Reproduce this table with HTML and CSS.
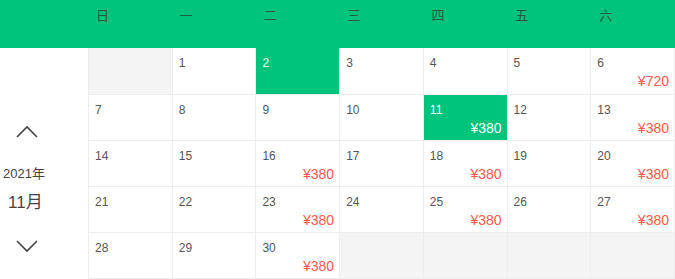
FILE: index.html
```html
<!DOCTYPE html>
<html lang="zh">
<head>
<meta charset="utf-8">
<link rel="stylesheet" href="styles.css">
</head>
<body>
<div class="cal">
  <div class="week">
    <div class="week-spacer"></div>
    <div class="wd">日</div><div class="wd">一</div><div class="wd">二</div><div class="wd">三</div><div class="wd">四</div><div class="wd">五</div><div class="wd">六</div>
  </div>
  <div class="body">
    <div class="side">
      <svg class="chev" width="24" height="14" viewBox="0 0 24 14"><path d="M2 12 L12 2 L22 12" fill="none" stroke="#444" stroke-width="1.6"/></svg>
      <div class="year">2021年</div>
      <div class="month">11月</div>
      <svg class="chev down" width="24" height="14" viewBox="0 0 24 14"><path d="M2 2 L12 12 L22 2" fill="none" stroke="#444" stroke-width="1.6"/></svg>
    </div>
    <div class="grid">
      <div class="cell empty"></div>
      <div class="cell"><span class="d">1</span></div>
      <div class="cell on"><span class="d">2</span></div>
      <div class="cell"><span class="d">3</span></div>
      <div class="cell"><span class="d">4</span></div>
      <div class="cell"><span class="d">5</span></div>
      <div class="cell"><span class="d">6</span><span class="p">¥720</span></div>

      <div class="cell"><span class="d">7</span></div>
      <div class="cell"><span class="d">8</span></div>
      <div class="cell"><span class="d">9</span></div>
      <div class="cell"><span class="d">10</span></div>
      <div class="cell on"><span class="d">11</span><span class="p">¥380</span></div>
      <div class="cell"><span class="d">12</span></div>
      <div class="cell"><span class="d">13</span><span class="p">¥380</span></div>

      <div class="cell"><span class="d">14</span></div>
      <div class="cell"><span class="d">15</span></div>
      <div class="cell"><span class="d">16</span><span class="p">¥380</span></div>
      <div class="cell"><span class="d">17</span></div>
      <div class="cell"><span class="d">18</span><span class="p">¥380</span></div>
      <div class="cell"><span class="d">19</span></div>
      <div class="cell"><span class="d">20</span><span class="p">¥380</span></div>

      <div class="cell"><span class="d">21</span></div>
      <div class="cell"><span class="d">22</span></div>
      <div class="cell"><span class="d">23</span><span class="p">¥380</span></div>
      <div class="cell"><span class="d">24</span></div>
      <div class="cell"><span class="d">25</span><span class="p">¥380</span></div>
      <div class="cell"><span class="d">26</span></div>
      <div class="cell"><span class="d">27</span><span class="p">¥380</span></div>

      <div class="cell"><span class="d">28</span></div>
      <div class="cell"><span class="d">29</span></div>
      <div class="cell"><span class="d">30</span><span class="p">¥380</span></div>
      <div class="cell empty"></div>
      <div class="cell empty"></div>
      <div class="cell empty"></div>
      <div class="cell empty"></div>
    </div>
  </div>
</div>
</body>
</html>
```

FILE: styles.css
```css
* { box-sizing: border-box; }
html, body { margin: 0; padding: 0; background: #fff; }
body { font-family: "Liberation Sans", Arial, "Noto Sans CJK SC", sans-serif; }
.cal { width: 675px; height: 279px; display: flex; flex-direction: column; overflow: hidden; }
.week {
  height: 48px; flex: none; background: #00c47c;
  display: grid; grid-template-columns: 88px repeat(7, 1fr);
}
.wd {
  padding: 7px 0 0 8px; font-size: 13px; line-height: 16px;
  color: #245a40; font-family: "Noto Sans CJK SC", sans-serif; font-weight: 400;
}
.body { flex: 1; display: flex; min-height: 0; }
.side {
  width: 88px; flex: none; display: flex; flex-direction: column;
  align-items: flex-start; color: #444;
}
.chev { margin: 77px 0 0 15px; display: block; }
.chev.down { margin: 26px 0 0 15px; }
.year { margin: 27px 0 0 3px; font-size: 13px; line-height: 16px; color: #444; }
.month { margin: 11px 0 0 8px; font-size: 17px; line-height: 20px; color: #444; }
.grid {
  flex: 1; display: grid; grid-template-columns: repeat(7, 1fr);
  grid-template-rows: 47px repeat(4, 46px);
  border-left: 1px solid #ededed;
}
.cell {
  border-right: 1px solid #ededed; border-bottom: 1px solid #ededed;
  display: flex; flex-direction: column; padding: 8px 5px 0 6px;
  background: #fff;
}
.cell.empty { background: #f4f4f5; }
.cell.on { background: #00c47c; }
.d { font-size: 12px; line-height: 14px; color: #555; }
.p { align-self: flex-end; margin-top: 3px; font-size: 14px; line-height: 16px; color: #ff5a4b; }
.on .d, .on .p { color: #fff; }
```
